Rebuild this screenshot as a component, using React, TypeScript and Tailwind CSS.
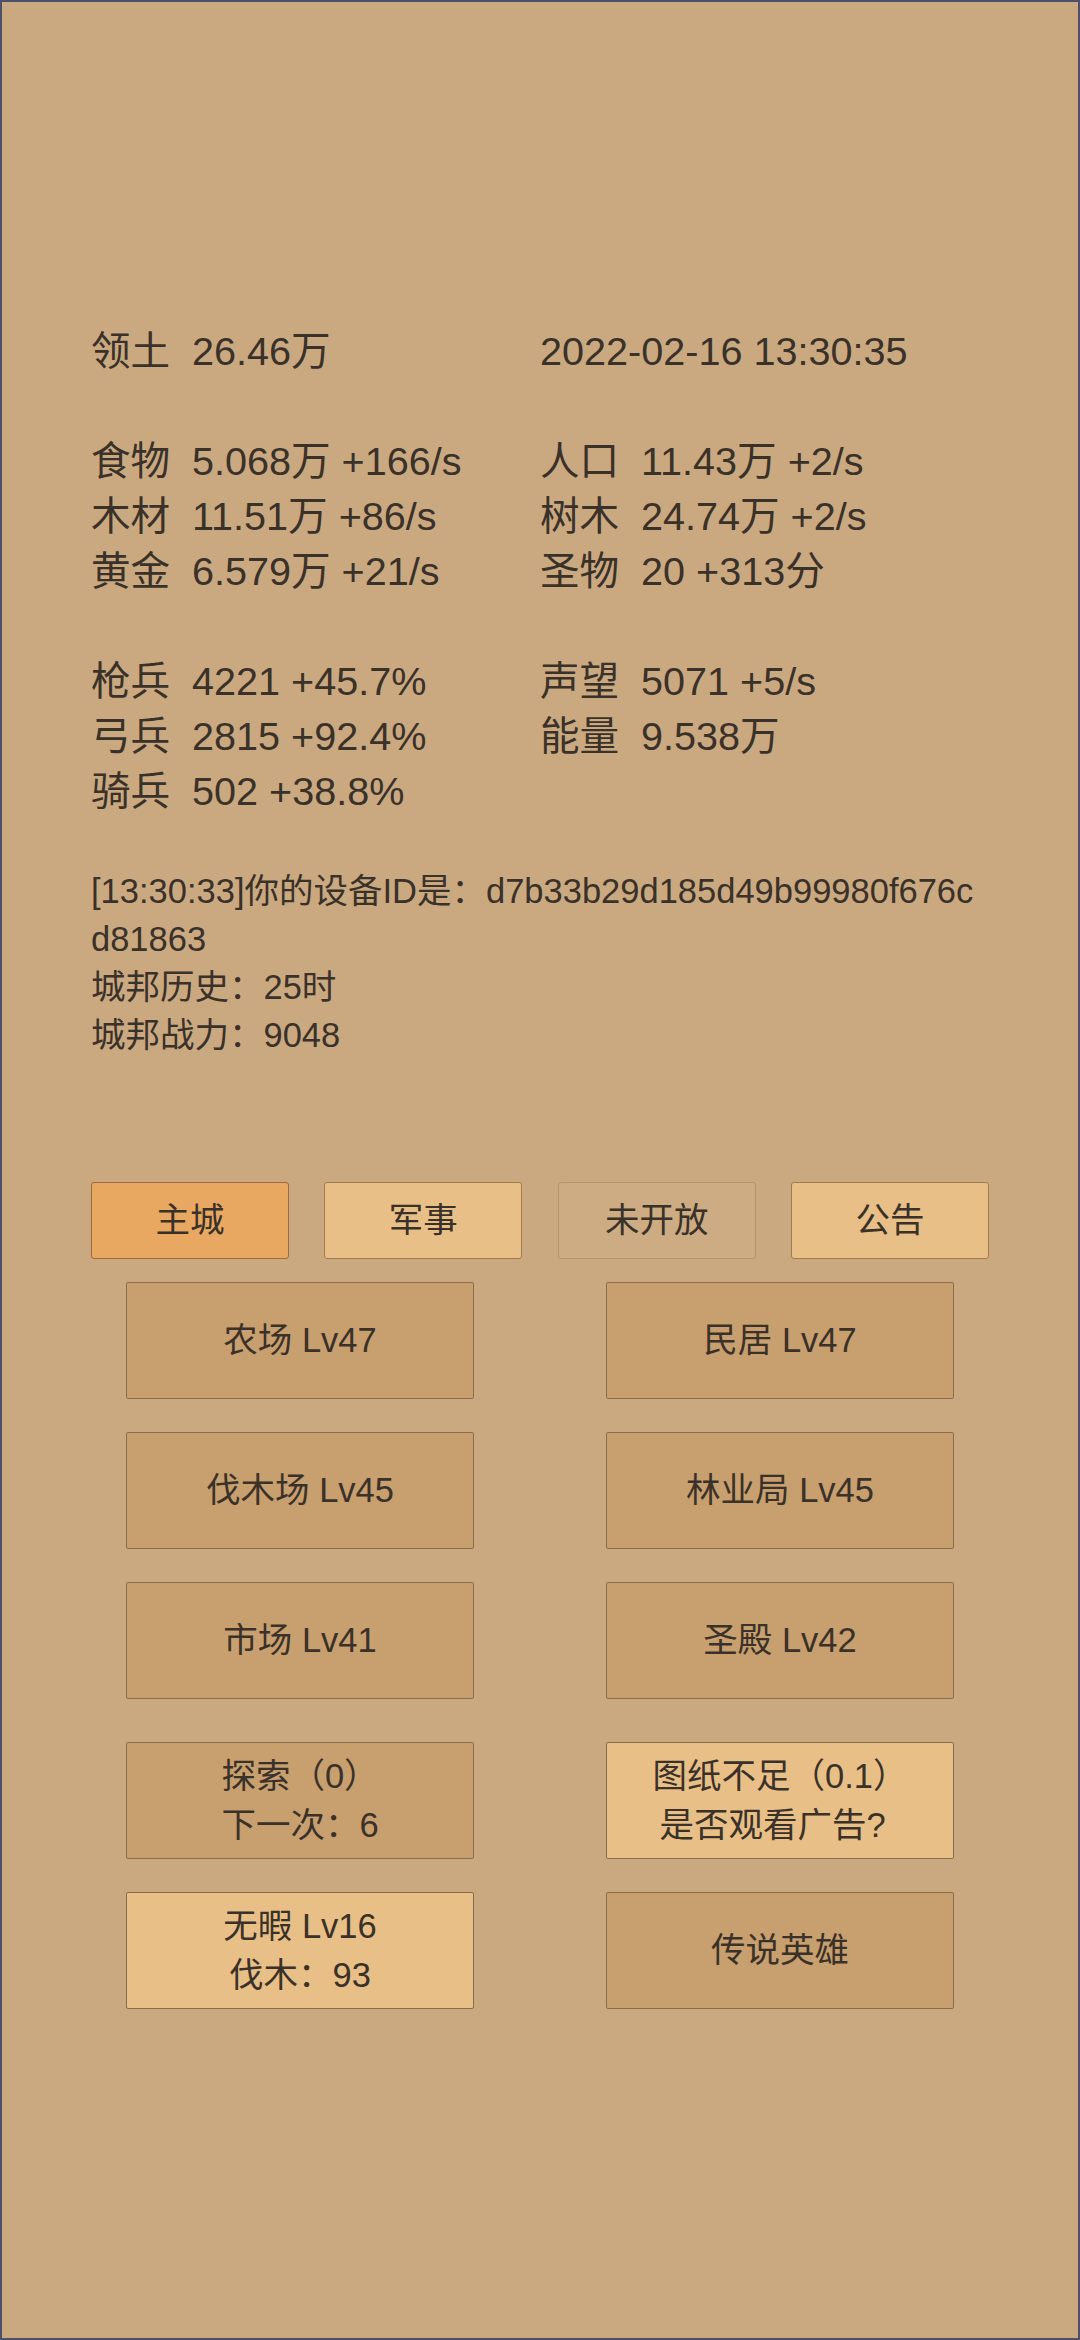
import React from "react";

const FONT = { fontFamily: '"Liberation Sans", "Noto Sans CJK SC", sans-serif' };

type Cell = { label: string; value: string } | null;

const rows: ([Cell, Cell] | "blank")[] = [
  [{ label: "领土", value: "26.46万" }, { label: "", value: "2022-02-16 13:30:35" }],
  "blank",
  [{ label: "食物", value: "5.068万 +166/s" }, { label: "人口", value: "11.43万 +2/s" }],
  [{ label: "木材", value: "11.51万 +86/s" }, { label: "树木", value: "24.74万 +2/s" }],
  [{ label: "黄金", value: "6.579万 +21/s" }, { label: "圣物", value: "20 +313分" }],
  "blank",
  [{ label: "枪兵", value: "4221 +45.7%" }, { label: "声望", value: "5071 +5/s" }],
  [{ label: "弓兵", value: "2815 +92.4%" }, { label: "能量", value: "9.538万" }],
  [{ label: "骑兵", value: "502 +38.8%" }, null],
];

function StatCell({ cell }: { cell: Cell }) {
  if (!cell) return <div />;
  if (!cell.label) return <div className="whitespace-nowrap">{cell.value}</div>;
  return (
    <div className="flex gap-[22px] whitespace-nowrap">
      <span className="w-[79px]">{cell.label}</span>
      <span>{cell.value}</span>
    </div>
  );
}

function Tab({ text, variant }: { text: string; variant: "active" | "light" | "off" }) {
  const cls =
    variant === "active"
      ? "bg-[#e9a862] border-[#9c6a3c]"
      : variant === "light"
      ? "bg-[#e8bf86] border-[#a37a4c]"
      : "bg-[#cdac83] border-[#b4946e]";
  return (
    <div
      className={`w-[198px] h-[77px] border rounded-[3px] flex items-center justify-center text-[34.5px] ${cls}`}
    >
      {text}
    </div>
  );
}

type Line = { text: string; cls?: string };

function Btn({ lines, light }: { lines: Line[]; light?: boolean }) {
  return (
    <div
      className={`w-[348px] h-[117px] border border-[#8c6c4a] rounded-[2px] flex flex-col items-center justify-center text-[34.5px] leading-[49px] ${
        light ? "bg-[#e8bf86]" : "bg-[#c89f6e]"
      }`}
    >
      {lines.map((l, i) => (
        <div key={i} className={l.cls}>
          {l.text}
        </div>
      ))}
    </div>
  );
}

function BtnRow({ children, className = "" }: { children: React.ReactNode; className?: string }) {
  return <div className={`flex justify-center gap-[132px] ${className}`}>{children}</div>;
}

export default function App() {
  return (
    <div
      style={FONT}
      className="w-[1080px] h-[2340px] border-2 border-[#4d5068] bg-[#caa981] text-[#3a3129] px-[89px] pt-[322px] box-border overflow-hidden"
    >
      <div className="text-[39.6px] leading-[55px]">
        {rows.map((r, i) =>
          r === "blank" ? (
            <div key={i} className="h-[55px]" />
          ) : (
            <div key={i} className="grid grid-cols-2">
              <StatCell cell={r[0]} />
              <StatCell cell={r[1]} />
            </div>
          )
        )}
      </div>

      <div className="mt-[48px] text-[34.5px] leading-[48px] break-all">
        <div>[13:30:33]你的设备ID是：d7b33b29d185d49b99980f676cd81863</div>
        <div>城邦历史：25时</div>
        <div>城邦战力：9048</div>
      </div>

      <div className="mt-[123px] flex justify-between">
        <Tab text="主城" variant="active" />
        <Tab text="军事" variant="light" />
        <Tab text="未开放" variant="off" />
        <Tab text="公告" variant="light" />
      </div>

      <div className="-mx-[89px] mt-[23px] flex flex-col">
        <BtnRow>
          <Btn lines={[{ text: "农场 Lv47" }]} />
          <Btn lines={[{ text: "民居 Lv47" }]} />
        </BtnRow>
        <BtnRow className="mt-[33px]">
          <Btn lines={[{ text: "伐木场 Lv45" }]} />
          <Btn lines={[{ text: "林业局 Lv45" }]} />
        </BtnRow>
        <BtnRow className="mt-[33px]">
          <Btn lines={[{ text: "市场 Lv41" }]} />
          <Btn lines={[{ text: "圣殿 Lv42" }]} />
        </BtnRow>
        <BtnRow className="mt-[43px]">
          <Btn lines={[{ text: "探索（0）" }, { text: "下一次：6" }]} />
          <Btn
            lines={[{ text: "图纸不足（0.1）" }, { text: "是否观看广告?", cls: "pr-[15px]" }]}
            light
          />
        </BtnRow>
        <BtnRow className="mt-[33px]">
          <Btn lines={[{ text: "无暇 Lv16" }, { text: "伐木：93" }]} light />
          <Btn lines={[{ text: "传说英雄" }]} />
        </BtnRow>
      </div>
    </div>
  );
}
